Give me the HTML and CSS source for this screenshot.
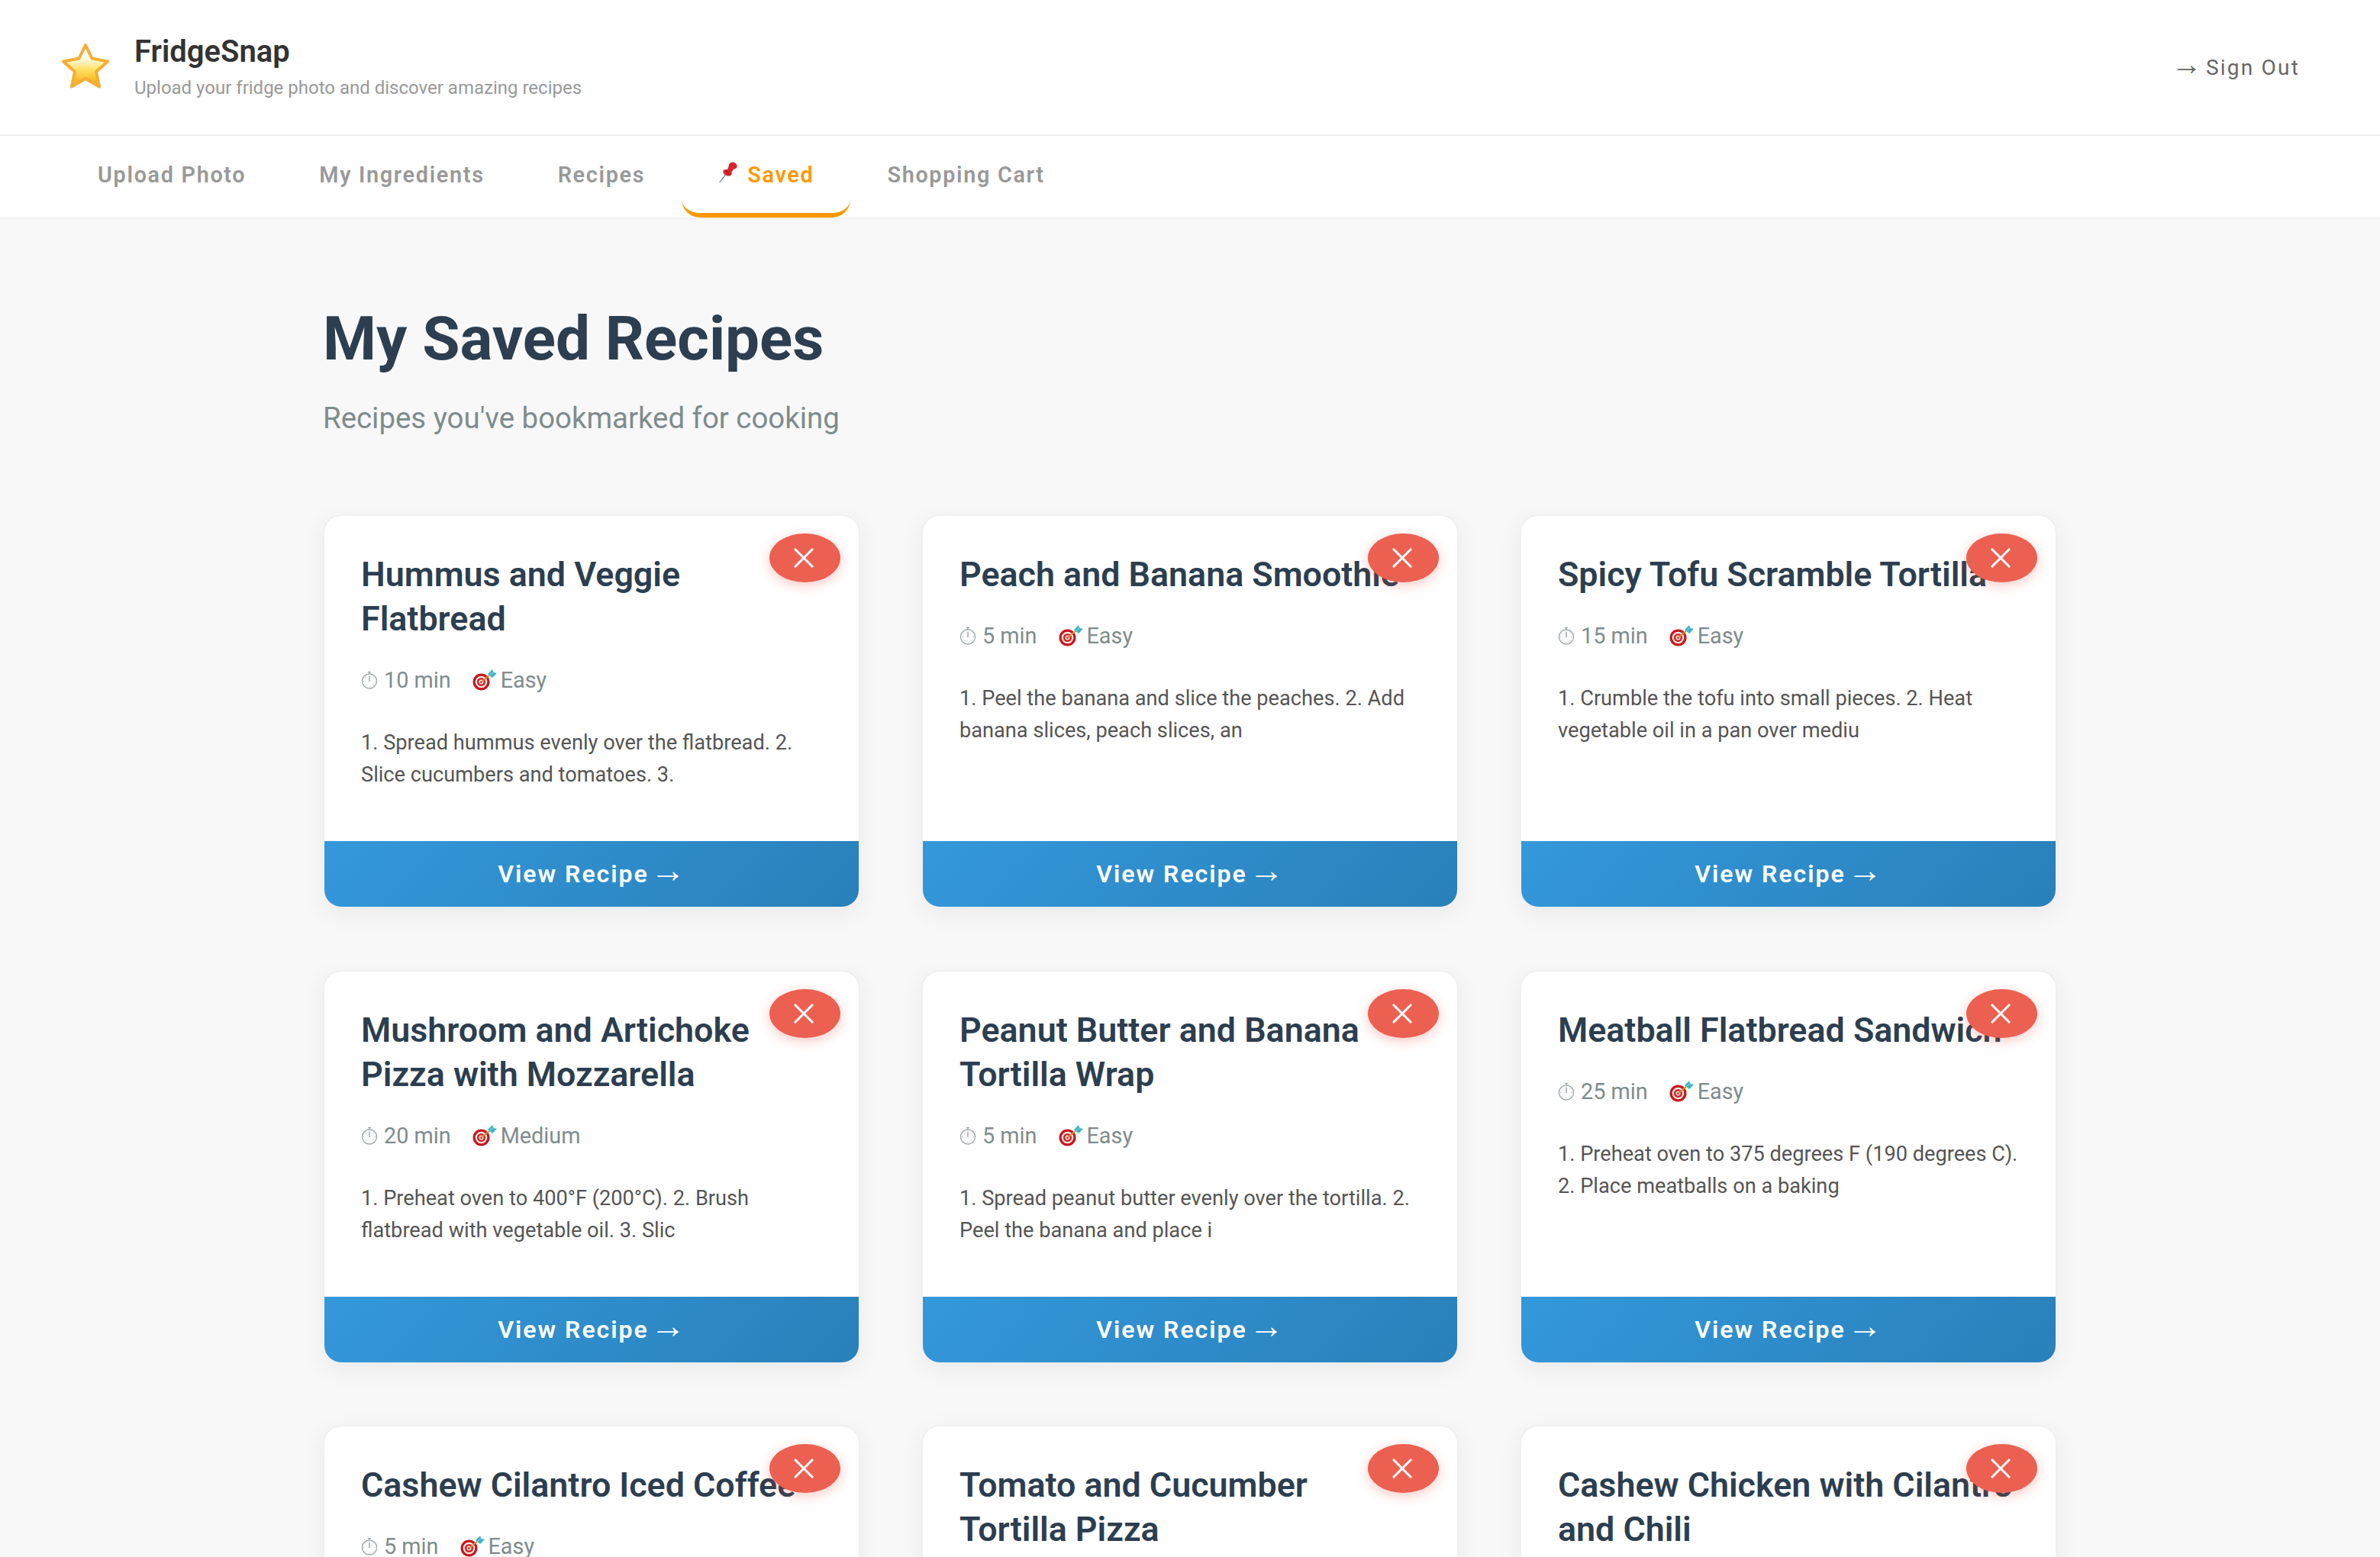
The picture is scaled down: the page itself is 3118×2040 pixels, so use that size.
FILE: index.html
```html
<!DOCTYPE html>
<html lang="en">
<head>
  <meta charset="UTF-8" />
  <title>FridgeSnap</title>
  <link rel="stylesheet" href="styles.css">
</head>
<body>

<svg class="defs" width="0" height="0">
  <defs>
    <linearGradient id="starFill" x1="0" y1="0" x2="0" y2="1">
      <stop offset="0.3" stop-color="#fffef0" />
      <stop offset="0.6" stop-color="#ffe060" />
      <stop offset="1" stop-color="#f8a30c" />
    </linearGradient>
    <symbol id="ico-watch" viewBox="0 0 22 24">
      <circle cx="11" cy="13.5" r="9.6" fill="#fafafa" stroke="#9aa3a6" stroke-width="1.2" />
      <path d="M9 1.5h4M11 1.5v2.4M11 7v7" fill="none" stroke="#8f989b" stroke-width="1.2" />
      <path d="M11 5.5v1M11 20.5v1M3 13.5h1M18 13.5h1M5.4 8l.7.7M16.6 8l-.7.7M5.4 19l.7-.7M16.6 19l-.7-.7" stroke="#a8b0b3" stroke-width="1" />
    </symbol>
    <symbol id="ico-target" viewBox="0 0 32 28">
      <circle cx="11.5" cy="16.5" r="11" fill="#c8161d" />
      <circle cx="11.5" cy="16.5" r="7.8" fill="#f4efe9" />
      <circle cx="11.5" cy="16.5" r="5.6" fill="#d9232a" />
      <circle cx="11.5" cy="16.500" r="3" fill="#f4efe9" />
      <circle cx="11.5" cy="16.500" r="1.5" fill="#c8161d" />
      <path d="M11.5 16.500 23 7" stroke="#d9933a" stroke-width="1.8" />
      <path d="M20 6l6-6 1.500 4 4.500 1-6 6z" fill="#3fb4c4" />
      <path d="M22 8l6-5" stroke="#8fdbe4" stroke-width="1" />
    </symbol>
    <symbol id="ico-x" viewBox="0 0 26 26">
      <path d="M1 1 25 25M25 1 1 25" fill="none" stroke="#fff" stroke-width="3" />
    </symbol>
  </defs>
</svg>

<header class="topbar">
  <div class="brand">
    <svg class="brand-star" viewBox="0 0 64 60">
      <polygon points="32,3 40.500,20.500 61,24.500 46,38 50,57.500 32,47 14,57.500 18,38 3,24.500 23.500,20.500" fill="url(#starFill)" stroke="#f6ae33" stroke-width="4" stroke-linejoin="round" />
    </svg>
    <div class="brand-text">
      <div class="brand-name">FridgeSnap</div>
      <div class="brand-tag">Upload your fridge photo and discover amazing recipes</div>
    </div>
  </div>
  <button class="signout"><span class="arrow">→</span> <span class="btn-label">Sign Out</span></button>
</header>

<nav class="tabs">
  <a class="tab">Upload Photo</a>
  <a class="tab">My Ingredients</a>
  <a class="tab">Recipes</a>
  <a class="tab active">
    <svg class="tab-pin" viewBox="0 0 28 32">
      <path d="M1 31 11 18" stroke="#7d93ad" stroke-width="1.600" />
      <path d="M15 4c2-3 5-4 8-3 3 1 5 4 4 7-1 2-3 3-5 3l-3 5c1 2 0 4-2 5-3 1-8-1-10-4-1-2-1-4 1-5l5-1c1-2 2-4 2-7z" fill="#d8262c" />
      <path d="M10 13l7 6" stroke="#a31c22" stroke-width="3" opacity="0.6" />
    </svg>
    Saved
  </a>
  <a class="tab">Shopping Cart</a>
</nav>

<main class="page">
  <h1>My Saved Recipes</h1>
  <p class="sub">Recipes you've bookmarked for cooking</p>

  <div class="grid">

    <div class="card">
      <button class="remove"><svg><use href="#ico-x" /></svg></button>
      <div class="card-body">
        <h3>Hummus and Veggie Flatbread</h3>
        <div class="meta">
          <span><svg class="i-watch"><use href="#ico-watch" /></svg>10 min</span>
          <span><svg class="i-target"><use href="#ico-target" /></svg>Easy</span>
        </div>
        <p class="desc">1. Spread hummus evenly over the flatbread. 2. Slice cucumbers and tomatoes. 3.</p>
      </div>
      <button class="view"><span class="btn-label">View Recipe</span> <span class="arrow">→</span></button>
    </div>

    <div class="card">
      <button class="remove"><svg><use href="#ico-x" /></svg></button>
      <div class="card-body">
        <h3>Peach and Banana Smoothie</h3>
        <div class="meta">
          <span><svg class="i-watch"><use href="#ico-watch" /></svg>5 min</span>
          <span><svg class="i-target"><use href="#ico-target" /></svg>Easy</span>
        </div>
        <p class="desc">1. Peel the banana and slice the peaches. 2. Add banana slices, peach slices, an</p>
      </div>
      <button class="view"><span class="btn-label">View Recipe</span> <span class="arrow">→</span></button>
    </div>

    <div class="card">
      <button class="remove"><svg><use href="#ico-x" /></svg></button>
      <div class="card-body">
        <h3>Spicy Tofu Scramble Tortilla</h3>
        <div class="meta">
          <span><svg class="i-watch"><use href="#ico-watch" /></svg>15 min</span>
          <span><svg class="i-target"><use href="#ico-target" /></svg>Easy</span>
        </div>
        <p class="desc">1. Crumble the tofu into small pieces. 2. Heat vegetable oil in a pan over mediu</p>
      </div>
      <button class="view"><span class="btn-label">View Recipe</span> <span class="arrow">→</span></button>
    </div>

    <div class="card">
      <button class="remove"><svg><use href="#ico-x" /></svg></button>
      <div class="card-body">
        <h3>Mushroom and Artichoke Pizza with Mozzarella</h3>
        <div class="meta">
          <span><svg class="i-watch"><use href="#ico-watch" /></svg>20 min</span>
          <span><svg class="i-target"><use href="#ico-target" /></svg>Medium</span>
        </div>
        <p class="desc">1. Preheat oven to 400°F (200°C). 2. Brush flatbread with vegetable oil. 3. Slic</p>
      </div>
      <button class="view"><span class="btn-label">View Recipe</span> <span class="arrow">→</span></button>
    </div>

    <div class="card">
      <button class="remove"><svg><use href="#ico-x" /></svg></button>
      <div class="card-body">
        <h3>Peanut Butter and Banana Tortilla Wrap</h3>
        <div class="meta">
          <span><svg class="i-watch"><use href="#ico-watch" /></svg>5 min</span>
          <span><svg class="i-target"><use href="#ico-target" /></svg>Easy</span>
        </div>
        <p class="desc">1. Spread peanut butter evenly over the tortilla. 2. Peel the banana and place i</p>
      </div>
      <button class="view"><span class="btn-label">View Recipe</span> <span class="arrow">→</span></button>
    </div>

    <div class="card">
      <button class="remove"><svg><use href="#ico-x" /></svg></button>
      <div class="card-body">
        <h3>Meatball Flatbread Sandwich</h3>
        <div class="meta">
          <span><svg class="i-watch"><use href="#ico-watch" /></svg>25 min</span>
          <span><svg class="i-target"><use href="#ico-target" /></svg>Easy</span>
        </div>
        <p class="desc">1. Preheat oven to 375 degrees F (190 degrees C). 2. Place meatballs on a baking</p>
      </div>
      <button class="view"><span class="btn-label">View Recipe</span> <span class="arrow">→</span></button>
    </div>

    <div class="card">
      <button class="remove"><svg><use href="#ico-x" /></svg></button>
      <div class="card-body">
        <h3>Cashew Cilantro Iced Coffee</h3>
        <div class="meta">
          <span><svg class="i-watch"><use href="#ico-watch" /></svg>5 min</span>
          <span><svg class="i-target"><use href="#ico-target" /></svg>Easy</span>
        </div>
      </div>
    </div>

    <div class="card">
      <button class="remove"><svg><use href="#ico-x" /></svg></button>
      <div class="card-body">
        <h3>Tomato and Cucumber Tortilla Pizza</h3>
      </div>
    </div>

    <div class="card">
      <button class="remove"><svg><use href="#ico-x" /></svg></button>
      <div class="card-body">
        <h3>Cashew Chicken with Cilantro and Chili</h3>
      </div>
    </div>

  </div>
</main>

</body>
</html>
```

FILE: styles.css
```css
* {
  box-sizing: border-box;
}
html, body {
  height: 100%;
}
body {
  margin: 0;
  font-family: Roboto, "Liberation Sans", sans-serif;
  background: #f8f8f8;
  overflow: hidden;
}
.defs {
  position: absolute;
}
.arrow {
  font-family: "Liberation Sans", sans-serif;
  font-size: 1.440em;
  font-weight: 400;
  line-height: 0;
  letter-spacing: 0;
}
.btn-label {
  word-spacing: 0;
}
.topbar {
  height: 178px;
  background: white;
  border-bottom: 2px solid #f0f0f0;
  display: flex;
  justify-content: space-between;
  align-items: center;
  padding: 0 105px 0 80px;
}
.brand {
  display: flex;
  align-items: center;
  gap: 32px;
}
.brand-star {
  width: 64px;
  height: 60px;
  margin-top: -4px;
}
.brand-text {
  margin-top: -4px;
}
.brand-name {
  font-size: 40px;
  font-weight: 600;
  color: #333;
  line-height: 47px;
}
.brand-tag {
  font-size: 24px;
  color: #999;
  margin-top: 10px;
  line-height: 28px;
}
.signout {
  background: none;
  border: none;
  padding: 0;
  font-family: inherit;
  font-size: 28px;
  font-weight: 400;
  letter-spacing: 2.200px;
  word-spacing: -4px;
  color: #666;
}
.tabs {
  height: 109px;
  background: white;
  border-bottom: 2px solid #f0f0f0;
  display: flex;
  padding: 0 80px;
}
.tab {
  display: flex;
  align-items: center;
  gap: 12px;
  height: 107px;
  padding: 0 48px;
  font-size: 28.800px;
  font-weight: 600;
  letter-spacing: 1.680px;
  color: #999;
  border-bottom: 6px solid transparent;
  border-radius: 0 0 24px 24px;
}
.tab.active {
  color: #ff9800;
  border-bottom-color: #ff9800;
}
.tab-pin {
  width: 26px;
  height: 28px;
  margin-top: -6px;
}
.page {
  width: 2272px;
  margin: 0 auto;
  padding-top: 110px;
}
h1 {
  margin: 0;
  font-size: 80px;
  line-height: 94px;
  font-weight: 700;
  color: #2c3e50;
}
.sub {
  margin: 34px 0 0;
  font-size: 38.400px;
  line-height: 45px;
  color: #7f8c8d;
}
.grid {
  display: grid;
  grid-template-columns: repeat(3, 704px);
  grid-auto-rows: 516px;
  gap: 80.500px 80px;
  margin-top: 104px;
}
.card {
  position: relative;
  background: white;
  border: 2px solid #f0f0f0;
  border-radius: 24px;
  box-shadow: 0 8px 32px rgba(0, 0, 0, 0.06);
  display: flex;
  flex-direction: column;
  overflow: hidden;
}
.remove {
  position: absolute;
  top: 23px;
  right: 24px;
  width: 93px;
  height: 64px;
  padding: 0 3px 0 0;
  border: none;
  border-radius: 50%;
  background: #ec6052;
  box-shadow: 0 4px 16px rgba(231, 76, 60, 0.3);
  display: flex;
  align-items: center;
  justify-content: center;
}
.remove svg {
  width: 26px;
  height: 26px;
}
.card-body {
  flex: 1;
  padding: 48px 48px 0;
}
h3 {
  margin: 0;
  font-size: 44.800px;
  line-height: 58px;
  font-weight: 600;
  color: #2c3e50;
}
.meta {
  display: flex;
  gap: 28px;
  margin-top: 34px;
  font-size: 28.800px;
  line-height: 34px;
  color: #7f8c8d;
}
.meta span {
  display: flex;
  align-items: center;
}
.i-watch {
  width: 22px;
  height: 24px;
  margin-right: 8px;
}
.i-target {
  width: 32px;
  height: 28px;
  margin-right: 5px;
}
.desc {
  margin: 44px 0 0;
  font-size: 27.200px;
  line-height: 42px;
  color: #555;
}
.view {
  height: 86px;
  flex-shrink: 0;
  border: none;
  font-family: inherit;
  font-size: 32px;
  font-weight: 600;
  letter-spacing: 2px;
  word-spacing: -8px;
  color: white;
  background: linear-gradient(135deg, #3498db, #2980b9);
}
```
